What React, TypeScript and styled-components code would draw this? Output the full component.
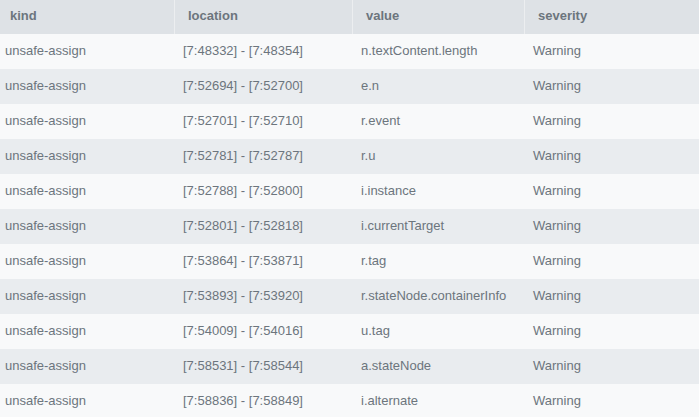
import React from "react";
import styled, { createGlobalStyle } from "styled-components";

const rows = [
  ["unsafe-assign", "[7:48332] - [7:48354]", "n.textContent.length", "Warning"],
  ["unsafe-assign", "[7:52694] - [7:52700]", "e.n", "Warning"],
  ["unsafe-assign", "[7:52701] - [7:52710]", "r.event", "Warning"],
  ["unsafe-assign", "[7:52781] - [7:52787]", "r.u", "Warning"],
  ["unsafe-assign", "[7:52788] - [7:52800]", "i.instance", "Warning"],
  ["unsafe-assign", "[7:52801] - [7:52818]", "i.currentTarget", "Warning"],
  ["unsafe-assign", "[7:53864] - [7:53871]", "r.tag", "Warning"],
  ["unsafe-assign", "[7:53893] - [7:53920]", "r.stateNode.containerInfo", "Warning"],
  ["unsafe-assign", "[7:54009] - [7:54016]", "u.tag", "Warning"],
  ["unsafe-assign", "[7:58531] - [7:58544]", "a.stateNode", "Warning"],
  ["unsafe-assign", "[7:58836] - [7:58849]", "i.alternate", "Warning"],
];

const headers = ["kind", "location", "value", "severity"];

function App() {
  return (
    <>
      <GlobalStyle />
      <Table>
        <HeadRow>
          {headers.map((h, i) => (
            <HeadCell key={h} first={i === 0} last={i === headers.length - 1}>
              {h}
            </HeadCell>
          ))}
        </HeadRow>
        {rows.map((r, i) => (
          <Row key={i} striped={i % 2 === 1}>
            {r.map((c, j) => (
              <Cell key={j} first={j === 0}>
                {c}
              </Cell>
            ))}
          </Row>
        ))}
      </Table>
    </>
  );
}

export default App;

const GlobalStyle = createGlobalStyle`
  html, body {
    margin: 0;
    padding: 0;
    background: #f8f9fa;
    overflow: hidden;
  }
  body {
    font-family: "Liberation Sans", Arial, sans-serif;
  }
`;

const Table = styled.div`
  width: 699px;
  display: flex;
  flex-direction: column;
`;

const cols = "175px 178px 172px 1fr";

const HeadRow = styled.div`
  display: grid;
  grid-template-columns: ${cols};
  height: 34px;
  background: #dee2e6;
`;

const HeadCell = styled.div<{ first?: boolean; last?: boolean }>`
  display: flex;
  align-items: center;
  padding-left: ${(p) => (p.first ? "10px" : "13px")};
  padding-bottom: 3px;
  font-size: 13px;
  font-weight: bold;
  color: #6c757d;
  border-right: ${(p) => (p.last ? "none" : "1px solid #eceef0")};
`;

const Row = styled.div<{ striped?: boolean }>`
  display: grid;
  grid-template-columns: ${cols};
  height: 35px;
  background: ${(p) => (p.striped ? "#e9ecef" : "#f8f9fa")};
`;

const Cell = styled.div<{ first?: boolean }>`
  display: flex;
  align-items: center;
  padding-left: ${(p) => (p.first ? "5px" : "8px")};
  padding-bottom: 2px;
  font-size: 13px;
  color: #6c757d;
  white-space: nowrap;
`;
